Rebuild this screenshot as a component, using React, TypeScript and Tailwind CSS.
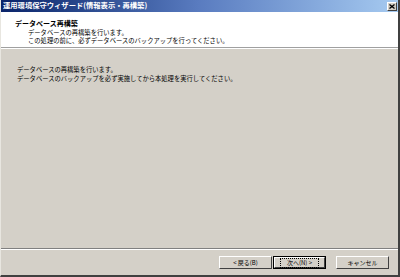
/**
 * MaintenanceWizard - classic Windows style wizard dialog (database rebuild step)
 */

const jp = "font-['MS_UI_Gothic','Noto_Sans_CJK_JP',sans-serif]"

function ClassicButton({ label, isDefault = false }: { label: string; isDefault?: boolean }): JSX.Element {
  return (
    <div className={`w-[53px] h-[13px] ${isDefault ? 'border border-black' : ''}`}>
      <div className="w-full h-full border-t border-l border-white border-r border-b border-r-[#404040] border-b-[#404040] bg-[#d4d0c8] flex items-center justify-center">
        <span
          className={`text-[6px] leading-none text-black ${
            isDefault ? 'border border-dotted border-black px-[6px] py-[1px]' : ''
          }`}
        >
          {label}
        </span>
      </div>
    </div>
  )
}

export default function App(): JSX.Element {
  return (
    <div className={`w-[400px] h-[277px] bg-[#d4d0c8] flex flex-col border-l border-l-[#e8e6e0] border-r-2 border-r-[#404040] border-b-2 border-b-[#404040] ${jp}`}>
      {/* title bar */}
      <div className="h-[12px] flex items-center justify-between bg-gradient-to-r from-[#0a246a] via-[#5a7cc0] to-[#a6caf0] pl-[2px] pr-[1px]">
        <span className="text-[7.3px] font-bold text-white leading-none">運用環境保守ウィザード(情報表示・再構築)</span>
        <div className="w-[10px] h-[9px] bg-[#d4d0c8] border-t border-l border-white border-r border-b border-r-[#404040] border-b-[#404040] flex items-center justify-center">
          <svg width="6" height="5" viewBox="0 0 6 5">
            <path d="M0.5 0.5 L5.5 4.5 M5.5 0.5 L0.5 4.5" stroke="black" strokeWidth="1.3" />
          </svg>
        </div>
      </div>

      {/* header */}
      <div className="h-[35px] bg-white pt-[7px] pl-[14px]">
        <p className="text-[7px] font-bold text-black leading-[8px]">データベース再構築</p>
        <div className="mt-[2px] pl-[13px] text-[6.3px] text-black leading-[8px]">
          <p>データベースの再構築を行います。</p>
          <p>この処理の前に、必ずデータベースのバックアップを行ってください。</p>
        </div>
      </div>
      <div className="h-px bg-[#a0a0a0]" />
      <div className="h-px bg-white" />

      {/* body */}
      <div className="flex-1 pt-[16px] pl-[16px] text-[6.3px] text-black leading-[9px]">
        <p>データベースの再構築を行います。</p>
        <p>データベースのバックアップを必ず実施してから本処理を実行してください。</p>
      </div>

      <div className="h-px bg-[#808080]" />
      <div className="h-px bg-white" />

      {/* footer */}
      <div className="h-[25px] flex items-start justify-end pt-[6px] pr-[9px]">
        <div className="flex gap-[1px]">
          <ClassicButton label="< 戻る(B)" />
          <ClassicButton label="次へ(N) >" isDefault />
        </div>
        <div className="ml-[10px]">
          <ClassicButton label="キャンセル" />
        </div>
      </div>
    </div>
  )
}
